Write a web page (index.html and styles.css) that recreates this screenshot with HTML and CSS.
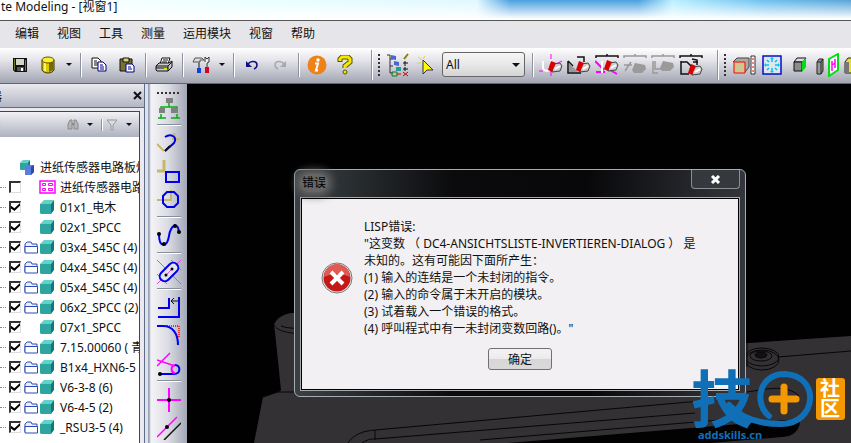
FILE: index.html
```html
<!DOCTYPE html>
<html lang="zh-CN">
<head>
    <meta charset="UTF-8">
    <meta name="viewport" content="width=device-width, initial-scale=1.0">
    <title>Modeling</title>
    <link rel="stylesheet" href="styles.css">
</head>
<body>
    <!-- Shared icon shapes -->
    <svg class="symbols" aria-hidden="true">
        <symbol id="cube" viewBox="0 0 14 14">
            <path d="M0 4 4 0h10l-3 4z" fill="#5fd3c8"/>
            <path d="M0 4h11v10H1L0 13z" fill="#2ea5a0"/>
            <path d="M11 4 14 0v10l-3 4z" fill="#14757a"/>
        </symbol>
        <symbol id="folder" viewBox="0 0 15 13">
            <path d="M1 11V3l2-2h4l1 2h5v3" fill="#eef" stroke="#2a4bb5"/>
            <path d="M1 12V5.500h12.500V12z" fill="#fff" stroke="#2a4bb5"/>
        </symbol>
        <symbol id="eraser" viewBox="0 0 16 12">
            <path d="M6 3l7-1 2 3-2 5-8 1z" fill="#ccc" stroke="#444"/>
            <path d="M4 0l5 2-4 9-4-2z" fill="#d80000"/>
            <path d="M8 8l5-3" stroke="#fff" stroke-width="2"/>
        </symbol>
        <symbol id="eraser-off" viewBox="0 0 16 12">
            <path d="M4 1 14 3l1 4-4 4H3L1 8z" fill="#9a9a9a"/>
        </symbol>
    </svg>

    <header class="titlebar">te Modeling - [视窗1]</header>

    <nav class="menubar">
        <button>编辑</button>
        <button>视图</button>
        <button>工具</button>
        <button>测量</button>
        <button>运用模块</button>
        <button>视窗</button>
        <button>帮助</button>
    </nav>

    <div class="toolbar">
        <button class="tool" aria-label="保存"><svg width="16" height="16"><path d="M1 1h14v14H3l-2-2z" fill="#111"/><path d="M4 2h8v6H4z" fill="#d5d5c4"/><path d="M2 2h1v11H2zM13 3h1v11h-1z" fill="#77772a"/><path d="M5 10h7v4H5z" fill="#555"/><path d="M9 11h2v3H9z" fill="#fff"/></svg></button>
        <button class="tool" aria-label="数据库"><svg width="16" height="18"><path d="M2 4v10c2 4 10 4 12 0V4z" fill="#d8c800" stroke="#3a3600"/><path d="M9 6h4.500v8L9 16z" fill="#736b00"/><path d="M4 6h2v9H4z" fill="#fff46a"/><ellipse cx="8" cy="4" rx="6" ry="3" fill="#ffee30" stroke="#5a5400"/></svg></button>
        <button class="drop" aria-label="更多"></button>
        <span class="sep"></span>
        <button class="tool" aria-label="复制"><svg width="16" height="16"><path d="M1 1h6l3 3v7H1z" fill="#fff" stroke="#111"/><path d="M3 4h3M3 6h4M3 8h4" stroke="#111"/><path d="M7 5h5l3 3v6H7z" fill="#fff" stroke="#000080"/><path d="M9 8h3M9 10h4M9 12h4" stroke="#000080"/></svg></button>
        <button class="tool" aria-label="粘贴"><svg width="16" height="16"><path d="M1 2h12v12H1z" fill="#77703a" stroke="#111"/><path d="M4 1h6v4H4z" fill="#ddd26a" stroke="#111"/><path d="M7 7h6l2 2v6H7z" fill="#fff" stroke="#000080"/><path d="M9 10h3M9 12h4" stroke="#000080"/></svg></button>
        <span class="sep"></span>
        <button class="tool" aria-label="打印"><svg width="18" height="16"><path d="M5 7 7 1h8l-2 6z" fill="#fff" stroke="#111"/><path d="M8 3h5M7 5h5" stroke="#111"/><path d="M1 9l3-3h10l3-2v6l-4 4H2l-1-1z" fill="#ccc" stroke="#111"/><path d="M1 9h12l4-4M1 11h12M13 9v5" fill="none" stroke="#111"/><path d="M9 11h3v1H9z" fill="#dd0"/></svg></button>
        <span class="sep"></span>
        <button class="tool" aria-label="工具"><svg width="18" height="18"><path d="M1 6 3 2h7l2 2H8v2H4z" fill="#ddd" stroke="#555"/><path d="M6 6h2v6H6z" fill="#777"/><path d="M5 12h4v5H5z" fill="#1040e0"/><path d="M13 6V1l2 2 2-2v5l-2 1v5" fill="#eee" stroke="#333"/><path d="M13 11h4v6h-4z" fill="#e00020"/></svg></button>
        <button class="drop" aria-label="更多"></button>
        <span class="sep"></span>
        <button class="tool" aria-label="撤销"><svg width="14" height="12"><path d="M3 5c3-4 9-3 9 1 0 2-1 3-3 4" fill="none" stroke="#101080" stroke-width="1.500"/><path d="M1 2v6h6z" fill="#101080"/></svg></button>
        <button class="tool" aria-label="重做"><svg width="14" height="12"><path d="M11 5C8 1 2 2 2 6c0 2 1 3 3 4" fill="none" stroke="#a5a8ad" stroke-width="1.500"/><path d="M13 2v6H7z" fill="#a5a8ad"/></svg></button>
        <span class="sep"></span>
        <button class="tool" aria-label="信息"><svg width="20" height="20"><circle cx="10" cy="10" r="9.500" fill="#ee8218"/><circle cx="11" cy="5" r="1.700" fill="#fff"/><path d="M8 8.500h3l-2 7h2" fill="none" stroke="#fff" stroke-width="2"/></svg></button>
        <button class="tool" aria-label="问号帮助"><svg width="16" height="20"><path d="M3 7V4l2-2h6l2 2v3l-5 4v2" fill="none" stroke="#5b5500" stroke-width="5"/><path d="M3 6V4l2-2h6l2 2v3l-5 4v2" fill="none" stroke="#f4e800" stroke-width="3"/><circle cx="8" cy="17" r="2" fill="#f4e800" stroke="#5b5500"/></svg></button>
        <span class="sep wide"></span>
        <span class="grip"></span>
        <button class="tool" aria-label="结构"><svg width="24" height="24"><path d="M1 2h3v18h3M4 6h3M4 13h3" fill="none" stroke="#333"/><path d="M5 2l5 1v4l-5-1zM8 8l5 1v4l-5-1z" fill="#4a67cf"/><path d="M10 14h5v4h-5z" fill="#289b96"/><path d="M6 19h5v4H6z" fill="none" stroke="#108010"/><path d="M11 21h4" stroke="#d00"/><path d="M18 6l4-5" stroke="#887c00" stroke-width="2"/><path d="M19 8v5M17 10h5M19 14v4M17 16h5" stroke="#111"/><path d="M17 19l5 4M22 19l-5 4" stroke="#c00000"/></svg></button>
        <button class="tool" aria-label="选择"><svg width="18" height="20"><path d="M1 2l4 3M8 1 6 4M0 8h4" stroke="#e3cf40"/><path d="M6 5v14l4-4h6z" fill="#fffb00" stroke="#333"/></svg></button>
        <span class="select-wrap"><select aria-label="选择过滤"><option>All</option></select></span>
        <span class="sep"></span>
        <button class="tool" aria-label="删除点"><svg width="24" height="22"><path d="M4 7v6c0 5 8 5 8 0V6" fill="none" stroke="#fff" stroke-width="2"/><path d="M12 0v5M12 17v5M0 17h4M17 10l6-3" stroke="#f0f"/><use href="#eraser" x="8" y="7" width="16" height="12"/></svg></button>
        <button class="tool" aria-label="删除边"><svg width="24" height="22"><path d="M1 7v12h13M10 3h7v5M1 7l5 5" fill="none" stroke="#111" stroke-width="1.500"/><path d="M2 9l9 9H2z" fill="#999"/><use href="#eraser" x="8" y="7" width="16" height="12"/></svg></button>
        <button class="tool" aria-label="删除线"><svg width="24" height="22"><path d="M1 4V2h22v2M12 2V0" fill="none" stroke="#111" stroke-width="1.500"/><path d="M0 7l9 9M1 18h9M15 16l7 4" stroke="#f0f" stroke-width="2"/><path d="M7 7v12" stroke="#fff" stroke-width="2"/><use href="#eraser" x="8" y="6" width="16" height="12"/></svg></button>
        <button class="tool" aria-label="删除面" disabled><svg width="24" height="22"><path d="M1 4V2h22v2M12 2V0M1 11h8M2 17l6-9" fill="none" stroke="#999" stroke-width="1.500"/><use href="#eraser-off" x="8" y="8" width="16" height="12"/></svg></button>
        <button class="tool" aria-label="删除体" disabled><svg width="24" height="22"><path d="M1 4V2h22v2M12 2V0M2 7v12h5M4 7v8h7" fill="none" stroke="#999" stroke-width="1.500"/><use href="#eraser-off" x="8" y="6" width="16" height="12"/></svg></button>
        <button class="tool" aria-label="全部删除"><svg width="24" height="22"><path d="M1 4V2h22v2M12 2V0M2 7v13h8M2 8h6l5 5M13 5l5 1v5M14 8h5" fill="none" stroke="#111" stroke-width="1.500"/><use href="#eraser" x="8" y="10" width="16" height="12"/></svg></button>
        <span class="sep wide"></span>
        <span class="grip"></span>
        <button class="tool" aria-label="尺寸"><svg width="24" height="20"><path d="M1 7l4-4h12v9l-4 5" fill="#aaa" stroke="#444"/><path d="M2 7h11v11H2z" fill="#cfc690" stroke="#f00"/><path d="M19 1h4v18h-4z" fill="#fff" stroke="#333"/><path d="M20 4h2M20 8h2M20 12h2M20 16h2" stroke="#e00"/></svg></button>
        <button class="tool" aria-label="适合窗口"><svg width="20" height="20"><path d="M1 1h18v18H1z" fill="#dde6ee" stroke="#0010c8" stroke-width="1.500"/><path d="M10 3v4M10 13v4M3 10h4M13 10h4M5 5l2 2M15 5l-2 2M5 15l2-2M15 15l-2-2" stroke="#00c4e8" stroke-width="1.500"/><path d="M8 4h4l-2-2zM8 16h4l-2 2zM4 8v4l-2-2zM16 8v4l2-2z" fill="#00c4e8"/></svg></button>
        <button class="tool" aria-label="正视图"><svg width="14" height="16"><path d="M1 5l3-4h9l-3 4z" fill="#ddd" stroke="#111"/><path d="M1 5h8v9H1z" fill="#8c8c8c" stroke="#111"/><path d="M9 5l4-4v9l-4 5z" fill="#00e010"/></svg></button>
        <button class="tool" aria-label="剖面"><svg width="26" height="24"><path d="M2 9l2-3h4v12l-2 3H2z" fill="#999" stroke="#222"/><path d="M2 9h4v12M6 9l2-3" fill="none" stroke="#222"/><path d="M14 6l9-5v16l-9 6z" fill="#fff" stroke="#00e010" stroke-width="2"/><path d="M17 8v10M20 6v9M17 12l3-2" stroke="#f0f" stroke-width="1.500"/></svg></button>
        <button class="tool" aria-label="侧视图"><svg width="24" height="18"><path d="M1 6l3-4h12v12l-3 3H1z" fill="#eadf20" stroke="#222"/><path d="M1 6h4v11H1z" fill="#777"/></svg></button>
    </div>

    <main class="workspace">
        <aside class="browser">
            <div class="browser-head">
                <span class="cut">器</span>
                <button class="close-panel" aria-label="关闭"><svg width="9" height="9"><path d="M1 1l7 7M8 1 1 8" stroke="#111" stroke-width="2"/></svg></button>
            </div>
            <div class="browser-body">
                <div class="browser-tools">
                    <span class="cut blue">1</span>
                    <button class="find" aria-label="查找"><svg width="12" height="11"><path d="M1 10V5l2-4h2v9zM7 10V1h2l2 4v5z" fill="#b5b5b5" stroke="#8a8a8a"/><path d="M5 5h2" stroke="#888" stroke-width="2"/></svg></button>
                    <button class="drop" aria-label="查找选项"></button>
                    <span class="sep"></span>
                    <button class="find" aria-label="过滤"><svg width="12" height="12"><path d="M1 1h10L7 6v5H5V6z" fill="#ddd" stroke="#999"/></svg></button>
                    <button class="drop" aria-label="过滤选项"></button>
                </div>
                <ul class="tree">
                    <li class="root"><svg width="15" height="15"><use href="#cube" width="10" height="10"/><path d="M5 7l3-2h6v7l-3 3H5z" fill="#5a7be0"/><path d="M11 7l3-2v7l-3 3z" fill="#3347a8"/></svg><span>进纸传感器电路板焊</span></li>
                    <li><label><input type="checkbox"><i></i><svg class="layout" width="17" height="14"><path d="M1 1h15v12H1z" fill="#fff" stroke="#f0f" stroke-width="1.500"/><path d="M3.500 3.500h3v2h-3zM9.500 3.500h4v2h-4zM3.500 8.500h3v2h-3zM9.500 8.500h4v2h-4z" fill="none" stroke="#f0f"/></svg><span>进纸传感器电路板</span></label></li>
                    <li><label><input type="checkbox" checked><i></i><svg class="part"><use href="#cube"/></svg><span>01x1_电木</span></label></li>
                    <li><label><input type="checkbox" checked><i></i><svg class="part"><use href="#cube"/></svg><span>02x1_SPCC</span></label></li>
                    <li><label><input type="checkbox" checked><svg class="folder"><use href="#folder"/></svg><svg class="part"><use href="#cube"/></svg><span>03x4_S45C (4)</span></label></li>
                    <li><label><input type="checkbox" checked><svg class="folder"><use href="#folder"/></svg><svg class="part"><use href="#cube"/></svg><span>04x4_S45C (4)</span></label></li>
                    <li><label><input type="checkbox" checked><svg class="folder"><use href="#folder"/></svg><svg class="part"><use href="#cube"/></svg><span>05x4_S45C (4)</span></label></li>
                    <li><label><input type="checkbox" checked><svg class="folder"><use href="#folder"/></svg><svg class="part"><use href="#cube"/></svg><span>06x2_SPCC (2)</span></label></li>
                    <li><label><input type="checkbox" checked><i></i><svg class="part"><use href="#cube"/></svg><span>07x1_SPCC</span></label></li>
                    <li><label><input type="checkbox" checked><svg class="folder"><use href="#folder"/></svg><svg class="part"><use href="#cube"/></svg><span>7.15.00060 ( 青</span></label></li>
                    <li><label><input type="checkbox" checked><svg class="folder"><use href="#folder"/></svg><svg class="part"><use href="#cube"/></svg><span>B1x4_HXN6-5</span></label></li>
                    <li><label><input type="checkbox" checked><svg class="folder"><use href="#folder"/></svg><svg class="part"><use href="#cube"/></svg><span>V6-3-8 (6)</span></label></li>
                    <li><label><input type="checkbox" checked><svg class="folder"><use href="#folder"/></svg><svg class="part"><use href="#cube"/></svg><span>V6-4-5 (2)</span></label></li>
                    <li><label><input type="checkbox" checked><svg class="folder"><use href="#folder"/></svg><svg class="part"><use href="#cube"/></svg><span>_RSU3-5 (4)</span></label></li>
                </ul>
            </div>
        </aside>

        <div class="draw-tools">
            <span class="grip-h"></span>
            <button aria-label="装配"><svg width="24" height="24"><path d="M12 7v4M4 14v-3h16v3M4 18v4M1 22h8M20 18v4M14 22h9" fill="none" stroke="#00b010" stroke-width="1.500"/><path d="M9 2h7v5H9zM2 12h6v5H2zM14 12h7v5h-7z" fill="#808080"/></svg></button>
            <hr>
            <button aria-label="圆弧"><svg width="24" height="24"><path d="M0 12l7 7M17 1l2 8M15 7h8" stroke="#c9b768" stroke-width="2"/><path d="M8 5c6-4 13 0 9 6l-9 8" fill="none" stroke="#0000e0" stroke-width="2"/><path d="M8 19l5-5" stroke="#111" stroke-width="2"/></svg></button>
            <button aria-label="矩形"><svg width="24" height="24"><path d="M7 0v11H0" fill="none" stroke="#c9b768" stroke-width="3"/><path d="M9 12h13v10H9z" fill="none" stroke="#0000f0" stroke-width="2"/></svg></button>
            <button aria-label="圆"><svg width="24" height="24"><path d="M14 2v10H0" fill="none" stroke="#c9b768" stroke-width="2"/><path d="M10 4h7l4 4v7l-4 4h-7l-4-4V8z" fill="none" stroke="#0000f0" stroke-width="2"/></svg></button>
            <hr>
            <button aria-label="样条"><svg width="24" height="24"><path d="M2 10c0 14 8 14 10 2s9-14 10-4" fill="none" stroke="#0000f0" stroke-width="2"/><circle cx="2" cy="10" r="2"/><circle cx="7" cy="20" r="2"/><circle cx="18" cy="2" r="2"/><circle cx="22" cy="8" r="2"/></svg></button>
            <hr>
            <button aria-label="长圆孔"><svg width="24" height="24"><path d="M0 0l24 24M0 24 24 0M0 14l10 10M14 0l10 10" stroke="#f040f0"/><rect x="1" y="7" width="22" height="10" rx="5" transform="rotate(-45 12 12)" fill="#e2e2ea" stroke="#0000f0" stroke-width="2"/><path d="M8 16l8-8" stroke="#f040f0"/><circle cx="9" cy="15" r="1.500"/><circle cx="15" cy="9" r="1.500"/></svg></button>
            <hr>
            <button aria-label="偏移"><svg width="24" height="24"><path d="M1 12h11V2M1 21h21V1" fill="none" stroke="#0000f0" stroke-width="2"/><path d="M14 5h7M17 2l-3 3 3 3" fill="none" stroke="#111"/></svg></button>
            <button aria-label="圆角"><svg width="24" height="24"><path d="M10 2h12v12" fill="none" stroke="#f00" stroke-width="1.500" stroke-dasharray="1 1"/><path d="M0 2h6c10 0 15 8 15 19" fill="none" stroke="#0000f0" stroke-width="2"/></svg></button>
            <button aria-label="相切"><svg width="24" height="24"><path d="M0 14 13 1M0 8l18 6" stroke="#f0f" stroke-width="1.500"/><path d="M3 22h14c7 0 7-9 1-9" fill="none" stroke="#0000f0" stroke-width="2"/><path d="M18 13c-5 1-4 8 0 8" fill="none" stroke="#f0f" stroke-width="2"/><circle cx="3" cy="22" r="2"/></svg></button>
            <hr>
            <button aria-label="十字线"><svg width="24" height="24"><path d="M12 0v24M0 12h24" stroke="#f0f" stroke-width="2"/><circle cx="12" cy="12" r="2"/></svg></button>
            <button aria-label="平行线"><svg width="24" height="24"><path d="M0 21 20 1" stroke="#f0f" stroke-width="1.500"/><path d="M7 24 24 7" stroke="#111" stroke-width="1.500"/><circle cx="10" cy="11" r="2"/></svg></button>
        </div>

        <section class="viewport">
            <svg class="model" viewBox="187 84 664 359" preserveAspectRatio="xMinYMin slice" aria-hidden="true">
                <path d="M274 325c2-6 8-11 18-12h90v80H278l3-3-6-58z" fill="#343134"/>
                <path d="M254 443l9-46 15-5 470-49 103-7v107z" fill="#343134"/>
                <path d="M263 397l15-5h30M274 325c4 6 12 8 30 9M281 326c8 3 16 2 22 2M348 443c5-8 14-12 27-13l325-29M362 443c6-4 9-4 13-4l320-26M375 430v10M480 440l240-20M778 357l73-6" fill="none" stroke="#080608"/>
                <path d="M508 443l292-24c1 10-6 18-18 18l-72 6z" fill="#020202"/>
                <g fill="none" stroke="#080608">
                    <ellipse cx="762" cy="360" rx="17" ry="10"/>
                    <ellipse cx="762" cy="357" rx="17" ry="9"/>
                    <ellipse cx="761" cy="356" rx="11" ry="5"/>
                    <ellipse cx="761" cy="355" rx="6" ry="3" fill="#111"/>
                    <path d="M747 343v24M747 392c20-3 40-8 52 4"/>
                </g>
            </svg>

            <div class="dialog" role="dialog" aria-labelledby="dialog-title">
                <div class="dialog-head">
                    <h2 id="dialog-title">错误</h2>
                    <button class="dialog-close" aria-label="关闭"><svg width="11" height="9"><path d="M2 1l7 7M9 1 2 8" stroke="#fff" stroke-width="3"/></svg></button>
                </div>
                <div class="dialog-body">
                    <div class="message">
                        <svg class="error-icon" viewBox="0 0 32 32">
                            <circle cx="16" cy="16" r="15" fill="#e8e8e8" stroke="#777"/>
                            <circle cx="16" cy="16" r="13.500" fill="#c41818"/>
                            <path d="M3 15a13 13 0 0 1 26 0c-8-4-18-4-26 0z" fill="#de5a52"/>
                            <path d="M10 10l12 12M22 10 10 22" stroke="#fff" stroke-width="4"/>
                        </svg>
                        <p>LISP错误:<br>
                        "这变数 （ DC4-ANSICHTSLISTE-INVERTIEREN-DIALOG ） 是<br>
                        未知的。这有可能因下面所产生：<br>
                        (1) 输入的连结是一个未封闭的指令。<br>
                        (2) 输入的命令属于未开启的模块。<br>
                        (3) 试着载入一个错误的格式。<br>
                        (4) 呼叫程式中有一未封闭变数回路()。"</p>
                    </div>
                    <button class="ok">确定</button>
                </div>
            </div>

            <div class="watermark">
                <div class="brand">
                    <span class="brand-char">技</span>
                    <svg class="brand-mark" viewBox="0 0 88 60">
                        <path d="M44 47C29 35 33 5 60 5c36 2 32 50-4 50C32 55 15 48 4 36" fill="none" stroke="#0f70b8" stroke-width="6" stroke-linecap="round"/>
                        <path d="M59 18v24M47 30h24" stroke="#f39800" stroke-width="7" stroke-linecap="round"/>
                    </svg>
                    <span class="badge">社区</span>
                </div>
                <span class="site">addskills.cn</span>
            </div>
        </section>
    </main>
</body>
</html>
```
FILE: styles.css
```css
* {
    box-sizing: border-box;
}
body {
    margin: 0;
    height: 100vh;
    display: flex;
    flex-direction: column;
    overflow: hidden;
    background: #000;
    color: #111;
    font-family: "Noto Sans", "Noto Sans CJK SC", sans-serif;
    font-size: 12px;
}
button {
    margin: 0;
    padding: 0;
    border: 0;
    background: none;
    color: inherit;
    font: inherit;
}
svg {
    display: block;
    flex: none;
}
.symbols {
    position: absolute;
    width: 0;
    height: 0;
}

/* Title and menu */
.titlebar {
    flex: none;
    height: 21px;
    padding-left: 1px;
    line-height: 14px;
    border-bottom: 1px solid #555;
    background:
        linear-gradient(to bottom, transparent, #fff 95%),
        linear-gradient(to right, #fff 0, #eaffff 30%, #dff8ff 56%, #4aa0e0 60%, #4aa0e0 75%, #b8efff 79%, #6cc0f0 90%, #58a4d8);
}
.menubar {
    flex: none;
    display: flex;
    gap: 18px;
    height: 27px;
    padding: 0 15px 4px;
    background: #e6e5ea;
}

/* Toolbar */
.toolbar {
    flex: none;
    display: flex;
    align-items: center;
    height: 36px;
    padding: 0 0 2px 6px;
    overflow: hidden;
    background: linear-gradient(#fff, #e4e4ea 35%, #a2a5b2);
    border-bottom: 1px solid #666;
}
.tool {
    flex: none;
    display: flex;
    align-items: center;
    justify-content: center;
    width: 28px;
    height: 28px;
}
.drop {
    flex: none;
    width: 14px;
    height: 20px;
}
.drop::after,
.select-wrap::after {
    content: "";
    display: block;
    width: 0;
    margin: 0 auto;
    border: 3px solid transparent;
    border-top-color: #111;
    border-bottom: 0;
}
.sep {
    flex: none;
    width: 1px;
    height: 24px;
    margin: 0 4px;
    background: #8e93a3;
    box-shadow: 1px 0 #fff;
}
.sep.wide {
    height: 30px;
    margin-left: 12px;
}
.grip {
    flex: none;
    width: 2px;
    height: 22px;
    margin: 0 4px 0 2px;
    background: repeating-linear-gradient(#333 0 2px, transparent 2px 4px);
}
.select-wrap {
    flex: none;
    position: relative;
    width: 83px;
    margin: 0 3px 0 2px;
}
.select-wrap::after {
    position: absolute;
    top: 11px;
    right: 5px;
    border-width: 4px 4px 0;
    pointer-events: none;
}
.select-wrap select {
    display: block;
    appearance: none;
    width: 100%;
    height: 25px;
    padding: 0 3px;
    border: 1px solid #666;
    border-radius: 3px;
    background: linear-gradient(#f5f5f5, #e8e8e8 50%, #d4d4d6);
    color: #111;
    font: inherit;
}

.workspace {
    flex: 1;
    display: flex;
    min-height: 0;
}

/* Structure browser */
.browser {
    flex: none;
    display: flex;
    flex-direction: column;
    width: 145px;
    border-right: 1px solid #5d6c88;
    background: #e9e9ef;
}
.browser-head {
    display: flex;
    align-items: center;
    justify-content: space-between;
    height: 24px;
    padding-right: 2px;
    background: linear-gradient(#e9e9ee, #b3b6c3);
    border-bottom: 1px solid #5d6c88;
}
.cut {
    display: flex;
    justify-content: flex-end;
    width: 2px;
    overflow: hidden;
}
.blue {
    color: #0058b0;
}
.browser-body {
    flex: 1;
    min-height: 0;
    margin: 3px 4px 0 0;
    overflow: hidden;
    background: #fff;
    border-top: 1px solid #445;
    border-right: 1px solid #445;
}
.browser-tools {
    display: flex;
    align-items: center;
    height: 25px;
    padding-right: 3px;
    background: linear-gradient(#f1f1f5, #aeb1bf);
}
.browser-tools .cut {
    margin-right: auto;
}
.browser-tools .find {
    width: 16px;
}
.browser-tools .sep {
    height: 12px;
}
.tree {
    margin: 0;
    padding: 20px 0 0;
    list-style: none;
}
.tree li,
.tree label {
    display: flex;
    align-items: center;
    height: 20px;
    white-space: nowrap;
}
.tree .root {
    gap: 5px;
    padding-left: 20px;
}
.tree label::before {
    content: "";
    width: 6px;
    margin-right: 3px;
    border-top: 1px dotted #888;
}
.tree input {
    flex: none;
    appearance: none;
    width: 12px;
    height: 12px;
    margin: 0 3px 0 0;
    border: 1px solid #ddd;
    border-top: 2px solid #333;
    border-left: 2px solid #333;
    background: #fff;
}
.tree input:checked::before {
    content: "";
    display: block;
    width: 9px;
    height: 8px;
    background: #000;
    clip-path: polygon(0 35%, 38% 65%, 100% 0, 100% 35%, 38% 100%, 0 70%);
}
.tree i,
.folder {
    flex: none;
    width: 15px;
    height: 13px;
}
.part {
    width: 14px;
    height: 14px;
    margin: 0 6px 0 1px;
}
.layout {
    margin-right: 4px;
}

/* Drawing tools */
.draw-tools {
    flex: none;
    display: flex;
    flex-direction: column;
    align-items: center;
    width: 42px;
    padding: 8px 3px 0 6px;
    overflow: hidden;
    border-left: 3px solid #e0e2ea;
    background: linear-gradient(to right, #9ba2b5 0 1px, #f4f4f7 3px, #dcdde4 50%, #a3a7b6);
}
.draw-tools button {
    flex: none;
    display: flex;
    align-items: center;
    justify-content: center;
    height: 28px;
}
.draw-tools hr {
    flex: none;
    width: 24px;
    height: 2px;
    margin: 2px 0 4px;
    border: 0;
    border-top: 1px solid #888e9e;
    border-bottom: 1px solid #fff;
}
.grip-h {
    flex: none;
    width: 24px;
    height: 2px;
    background: repeating-linear-gradient(to right, #333 0 2px, transparent 2px 4px);
}

/* Model view */
.viewport {
    flex: 1;
    position: relative;
    min-width: 0;
    overflow: hidden;
    background: #020102;
}
.model {
    width: 100%;
    height: 100%;
}

/* Error dialog */
.dialog {
    position: absolute;
    top: 85px;
    left: 107px;
    width: 452px;
    padding: 0 5px 5px;
    border: 1px solid #a5adb0;
    border-radius: 6px;
    background: linear-gradient(to right, #3a4145, #0b0b0d 35%, #08080a 65%, #33363c);
}
.dialog-head {
    display: flex;
    align-items: flex-start;
    justify-content: space-between;
    height: 27px;
}
.dialog-head h2 {
    margin: 4px 0 0;
    padding: 0 2px;
    line-height: 18px;
    font-size: 12px;
    font-weight: normal;
    color: #000;
    border-radius: 9px;
    background: #666;
    box-shadow: 0 0 8px 4px #666;
}
.dialog-close {
    display: flex;
    align-items: center;
    justify-content: center;
    width: 49px;
    height: 19px;
    border: 1px solid #8b8f92;
    border-top: 0;
    border-radius: 0 0 4px 4px;
    background: #35383c;
}
.dialog-body {
    display: flex;
    flex-direction: column;
    align-items: center;
    gap: 11px;
    padding: 20px;
    border: 1px solid #aaa;
    outline: 1px solid #000;
    outline-offset: -2px;
    background: #f2f0f2;
}
.message {
    align-self: stretch;
    display: flex;
    align-items: center;
    gap: 11px;
}
.message p {
    margin: 0;
    line-height: 17px;
    white-space: nowrap;
}
.error-icon {
    width: 32px;
    height: 32px;
}
.ok {
    width: 64px;
    height: 22px;
    border: 1px solid #707070;
    border-radius: 3px;
    background: linear-gradient(#f3f3f3, #ebebeb 50%, #d6d6d6 50%, #dadada);
}

/* Watermark lies over the dialog and the model */
.watermark {
    position: absolute;
    right: 6px;
    bottom: 3px;
    color: #0f70b8;
}
.brand {
    display: flex;
    align-items: center;
}
.brand-char {
    line-height: 54px;
    padding-bottom: 6px;
    font-family: "Noto Sans CJK SC", sans-serif;
    font-size: 62px;
    font-weight: bold;
}
.brand-mark {
    width: 88px;
    height: 60px;
    margin-left: -28px;
}
.badge {
    width: 29px;
    margin-left: 3px;
    padding: 1px 4px;
    border-radius: 3px;
    background: #f39800;
    color: #fff;
    font-size: 20px;
    font-weight: bold;
    line-height: 20px;
    word-break: break-all;
}
.site {
    display: block;
    padding-left: 7px;
    font-size: 11px;
    font-weight: bold;
    line-height: 11px;
}
```
